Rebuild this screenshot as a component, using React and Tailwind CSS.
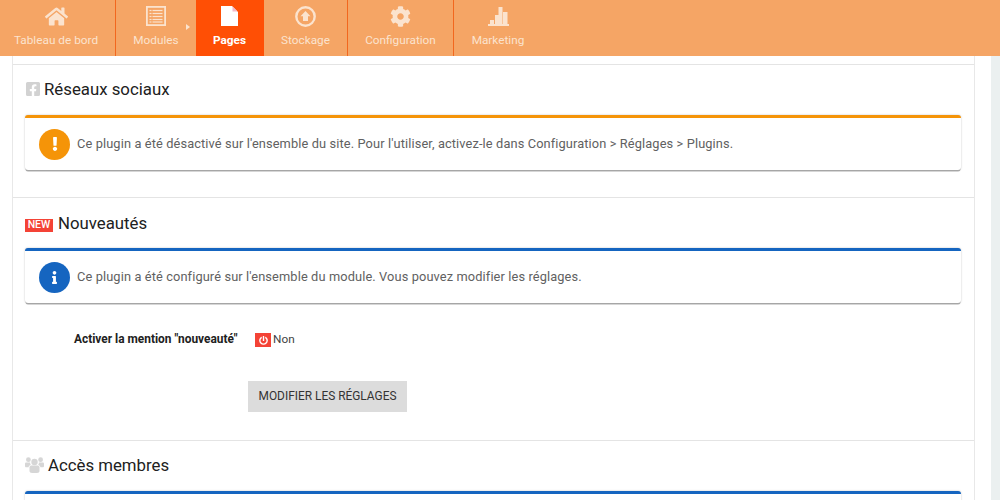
import React from "react";
import { FaHome, FaFacebookSquare, FaExclamation, FaInfo, FaPowerOff, FaCog } from "react-icons/fa";

const ModulesIcon = () => (
  <svg width="20" height="20" viewBox="0 0 20 20" fill="none" className="text-[#fbe3ce]">
    <rect x="0.9" y="0.9" width="18.2" height="18.2" stroke="currentColor" strokeWidth="1.8" />
    {[4.5, 7.5, 10.5, 13.5, 16].map((y) => (
      <g key={y}>
        <rect x="3.5" y={y - 0.6} width="2" height="1.2" fill="currentColor" />
        <rect x="6.5" y={y - 0.6} width="10" height="1.2" fill="currentColor" />
      </g>
    ))}
  </svg>
);

const PageIcon = () => (
  <svg width="17" height="20" viewBox="0 0 17 20">
    <path d="M0 0H11L17 6V20H0Z" fill="#fff" />
    <path d="M11.5 0.5L16.5 5.5H11.5Z" fill="#f3b7c8" />
  </svg>
);

const UploadIcon = () => (
  <svg width="21" height="21" viewBox="0 0 21 21">
    <circle cx="10.5" cy="10.5" r="9.2" fill="none" stroke="#fbe3ce" strokeWidth="2.4" />
    <path d="M10.5 5L15.5 10.2H13V15H8V10.2H5.5Z" fill="#fbe3ce" />
  </svg>
);

const ChartIcon = () => (
  <svg width="21" height="20" viewBox="0 0 21 20" fill="#fbe3ce">
    <rect x="0" y="18" width="21" height="2" />
    <rect x="2" y="14" width="4" height="4" />
    <rect x="7" y="9" width="4" height="9" />
    <rect x="10.5" y="1" width="4" height="17" />
    <rect x="15" y="6" width="4.5" height="12" />
  </svg>
);

const UsersIcon = () => (
  <svg width="19" height="16" viewBox="0 0 19 16" fill="#d6d6d6">
    <circle cx="9.5" cy="5" r="3.2" />
    <path d="M4.5 10.5C4.5 9 5.5 8.5 6.8 8.5H12.2C13.5 8.5 14.5 9 14.5 10.5V14C14.5 15.2 13.5 16 12 16H7C5.5 16 4.5 15.2 4.5 14Z" />
    <circle cx="3.4" cy="2.7" r="2.4" />
    <circle cx="15.6" cy="2.7" r="2.4" />
    <path d="M0 6.8C0 6 .6 5.6 1.3 5.6H5.2C5 6.6 5.4 7.2 5.8 7.8C4.6 8.2 3.8 9 3.6 10.3H1.2C.5 10.3 0 9.8 0 9Z" />
    <path d="M19 6.8C19 6 18.4 5.6 17.7 5.6H13.8C14 6.6 13.6 7.2 13.2 7.8C14.4 8.2 15.2 9 15.4 10.3H17.8C18.5 10.3 19 9.8 19 9Z" />
  </svg>
);

const navItems = [
  { label: "Tableau de bord", icon: <FaHome size={23} className="text-[#fbe3ce]" />, w: "w-[116px]", border: true, pr: "pr-[3px]" },
  { label: "Modules", icon: <ModulesIcon />, w: "w-[80px]", arrow: true },
  { label: "Pages", icon: <PageIcon />, w: "w-[68px]", active: true, pr: "pr-[1px]" },
  { label: "Stockage", icon: <UploadIcon />, w: "w-[84px]", border: true },
  { label: "Configuration", icon: <FaCog size={21} className="text-[#fbe3ce]" />, w: "w-[106px]", border: true },
  { label: "Marketing", icon: <ChartIcon />, w: "w-[88px]" },
];

function Alert({ color, children }) {
  return (
    <div className={`flex h-[55px] items-center gap-[7px] rounded-[3px] border-t-[3px] bg-white pl-[14px] shadow-[0_0_2px_0_rgba(0,0,0,0.25),0_2px_0_-0.5px_rgba(0,0,0,0.3)] ${color}`}>
      {children}
    </div>
  );
}

export default function App() {
  return (
    <div className="relative flex h-[500px] w-[1000px] flex-col overflow-hidden bg-white font-['Roboto',sans-serif]">
      <nav className="flex h-[56px] shrink-0 bg-[#f5a565]">
        {navItems.map((item) => (
          <div
            key={item.label}
            className={`relative flex h-full shrink-0 flex-col items-center ${item.w} ${item.pr || ""} ${item.active ? "bg-[#ff4f05]" : ""} ${item.border ? "border-r border-[#f2671e]" : ""}`}
          >
            <div className="flex h-[31px] items-center pt-[1px]">{item.icon}</div>
            <span className={`mt-[2px] text-[11.8px] leading-[14px] ${item.active ? "font-bold text-white" : "text-[#fbe3ce]"}`}>
              {item.label}
            </span>
            {item.arrow && (
              <span className="absolute right-[6px] top-[24px] h-0 w-0 border-y-[3.5px] border-l-[4px] border-y-transparent border-l-[#fbe3ce]" />
            )}
          </div>
        ))}
      </nav>

      <div className="flex min-h-0 flex-1">
        <main className="ml-[12px] w-[963px] shrink-0 border-x border-[#e8e8e8] pt-[8px]">
          <section className="h-[133px] border-t border-[#e4e4e4] pl-[12px] pr-[13px] pt-[14px]">
            <h2 className="flex h-[20px] items-center gap-[3px] text-[16.8px] leading-[20px] text-[#212121]">
              <FaFacebookSquare size={16} className="text-[#d2d2d2]" />
              Réseaux sociaux
            </h2>
            <div className="mt-[16px]">
              <Alert color="border-[#f59408]">
                <span className="flex h-[31px] w-[31px] items-center justify-center rounded-full bg-[#f59408] text-white">
                  <FaExclamation size={14} />
                </span>
                <p className="text-[12.8px] tracking-[0.12px] text-[#616161]">
                  Ce plugin a été désactivé sur l'ensemble du site. Pour l'utiliser, activez-le dans Configuration &gt; Réglages &gt; Plugins.
                </p>
              </Alert>
            </div>
          </section>

          <section className="h-[243px] border-t border-[#e4e4e4] pl-[12px] pr-[13px] pt-[15px]">
            <h2 className="flex h-[20px] items-center gap-[5px] text-[16.8px] leading-[20px] text-[#212121]">
              <span className="mt-[5px] flex h-[13px] w-[28px] items-center justify-center bg-[#f44336] text-[10.5px] font-medium leading-none text-white">NEW</span>
              Nouveautés
            </h2>
            <div className="mt-[15px]">
              <Alert color="border-[#1565c0]">
                <span className="flex h-[31px] w-[31px] items-center justify-center rounded-full bg-[#1565c0] text-white">
                  <FaInfo size={13} />
                </span>
                <p className="text-[12.8px] tracking-[0.12px] text-[#616161]">
                  Ce plugin a été configuré sur l'ensemble du module. Vous pouvez modifier les réglages.
                </p>
              </Alert>
            </div>
            <div className="mt-[29px] flex h-[16px] items-center pl-[49px]">
              <span className="w-[181px] text-[11.9px] font-bold text-[#212121]">Activer la mention "nouveauté"</span>
              <span className="flex h-[14px] w-[16px] items-center justify-center bg-[#f44336] text-white">
                <FaPowerOff size={9} />
              </span>
              <span className="ml-[2px] text-[11.8px] text-[#424242]">Non</span>
            </div>
            <button className="ml-[223px] mt-[33px] flex h-[31px] w-[159px] items-center justify-center bg-[#dcdcdc] text-[11.9px] text-[#333]">
              MODIFIER LES RÉGLAGES
            </button>
          </section>

          <section className="border-t border-[#e4e4e4] pl-[12px] pr-[13px] pt-[14px]">
            <h2 className="flex h-[20px] items-center gap-[4px] text-[16.8px] leading-[20px] text-[#212121]">
              <UsersIcon />
              Accès membres
            </h2>
            <div className="mt-[16px] h-[60px] rounded-[3px] border-t-[3px] border-[#1565c0] bg-white shadow-[0_0_2px_0_rgba(0,0,0,0.25),0_2px_0_-0.5px_rgba(0,0,0,0.3)]" />
          </section>
        </main>
        <div className="ml-auto w-[9px] bg-[#ebf0f0]" />
      </div>
    </div>
  );
}
